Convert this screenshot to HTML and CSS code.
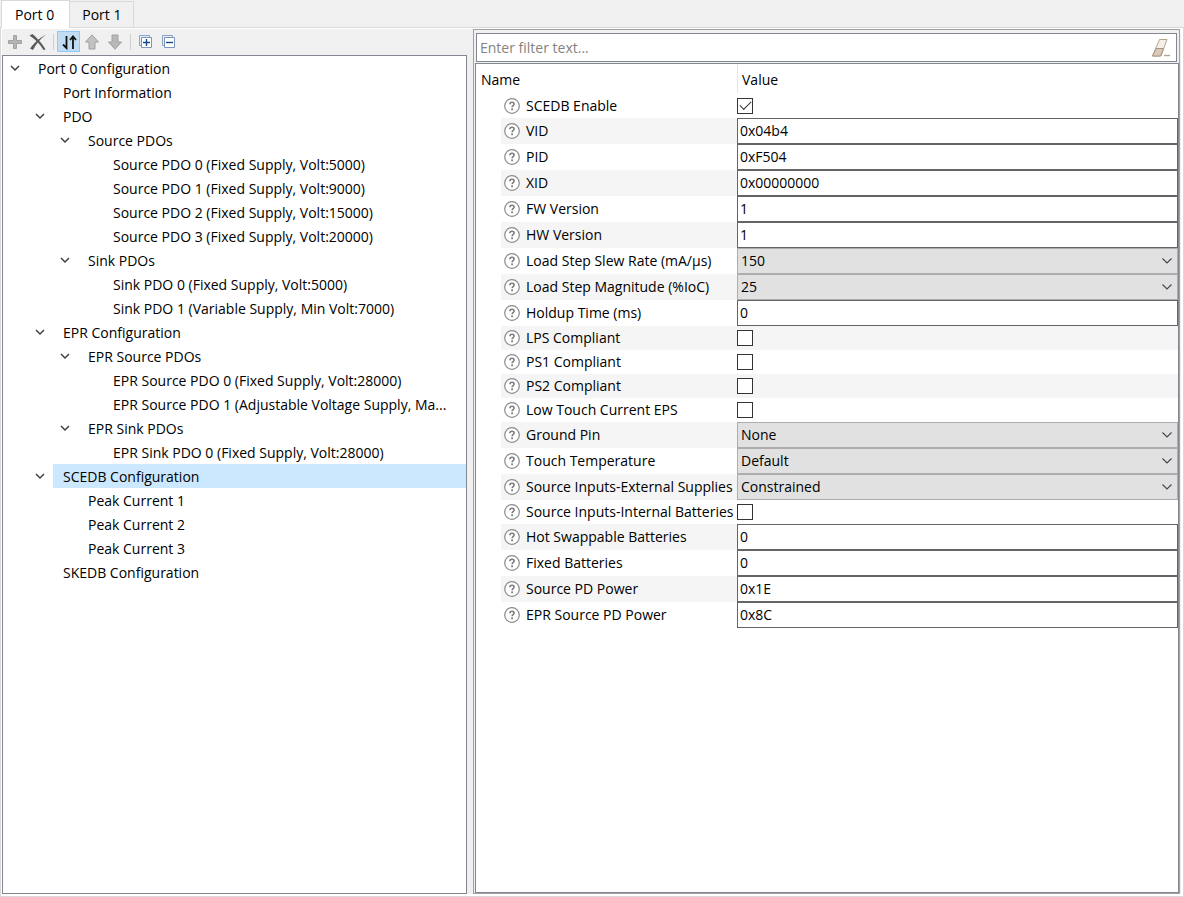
FILE: index.html
```html
<!DOCTYPE html>
<html lang="en">
<head>
<meta charset="utf-8">
<title>Port Configuration</title>
<link rel="stylesheet" href="styles.css">
</head>
<body>
<svg class="defs" aria-hidden="true">
  <symbol id="help" viewBox="0 0 16 16"><circle cx="8" cy="8" r="7.3" fill="#fff" stroke="#8a8a8a" stroke-width="1.2"/><path d="M5.9 6.3C5.9 4.9 6.8 4.3 8 4.3s2.1.7 2.1 1.8c0 1.5-2 1.5-2 3.2" fill="none" stroke="#7c7c7c" stroke-width="1.6"/><rect x="7.2" y="10.4" width="1.8" height="1.8" fill="#7c7c7c"/></symbol>
  <symbol id="chev" viewBox="0 0 10 10"><path d="M1 3l4 4 4-4" fill="none" stroke="#404040" stroke-width="1.5"/></symbol>
  <symbol id="drop" viewBox="0 0 10 10"><path d="M.5 2.5L5 7l4.500-4.500" fill="none" stroke="#444" stroke-width="1.1"/></symbol>
</svg>
<div class="app">
  <nav class="tabs" role="tablist">
    <button class="tab active" role="tab" aria-selected="true">Port 0</button>
    <button class="tab" role="tab" aria-selected="false">Port 1</button>
  </nav>
  <main class="content">
    <section class="left">
      <div class="toolbar" role="toolbar">
        <button class="tool" aria-label="Add"><svg viewBox="0 0 16 16"><path d="M6.500 1.500h3v5h5v3h-5v5h-3v-5h-5v-3h5z" fill="#b4b4b4" stroke="#a2a2a2"/></svg></button>
        <button class="tool" aria-label="Delete"><svg class="wide" viewBox="0 0 18 18"><path d="M.5 2.500L3.500 1C7 4 13 10 16.500 16.500l-2 .5C11 11 6 6 .5 2.500z" fill="#5a5a5a"/><path d="M17 1.500C10 5 5 10 1 15.500l3 1.500C7 11 11 6 17 1.500z" fill="#5a5a5a"/></svg></button>
        <span class="sep"></span>
        <button class="tool on" aria-label="Sort" aria-pressed="true"><svg class="wide" viewBox="0 0 18 18"><path d="M6.500 3v12M3 11.500l3.500 3.500V11M13 16V4M10 7l3-3.500L16 7" fill="none" stroke="#111" stroke-width="1.8"/></svg></button>
        <button class="tool" aria-label="Move up"><svg viewBox="0 0 16 16"><path d="M8 .8L14.500 8H11v7H5V8H1.500z" fill="#c2c2c2" stroke="#a0a0a0"/></svg></button>
        <button class="tool" aria-label="Move down"><svg viewBox="0 0 16 16"><path d="M8 15.200L14.500 8H11V1H5v7H1.500z" fill="#b8b8b8" stroke="#a0a0a0"/></svg></button>
        <span class="sep"></span>
        <button class="tool" aria-label="Expand all"><svg viewBox="0 0 16 16"><path d="M3.500 11.500h-2v-10h10v2" fill="#e5eef8" stroke="#8ba6c4"/><path d="M3.500 3.500h10v10h-10z" fill="#fff" stroke="#7c96b8"/><path d="M5 8.500h7M8.500 5v7" stroke="#174a85" stroke-width="1.4"/></svg></button>
        <button class="tool" aria-label="Collapse all"><svg viewBox="0 0 16 16"><path d="M3.500 11.500h-2v-10h10v2" fill="#e5eef8" stroke="#8ba6c4"/><path d="M3.500 3.500h10v10h-10z" fill="#fff" stroke="#7c96b8"/><path d="M5 8.500h7" stroke="#174a85" stroke-width="1.4"/></svg></button>
      </div>
      <div class="tree" id="tree"></div>
    </section>
    <section class="right">
      <div class="filter">
        <input type="text" aria-label="Filter" placeholder="Enter filter text...">
        <button class="clear" aria-label="Clear filter"><svg viewBox="0 0 20 20"><path d="M8.500 1.500h7.500L10 18H1.500z" fill="#f4efe9" stroke="#b5a48e"/><path d="M5 10.500h7.500L9.500 18H1.500z" fill="#d9c9b8" stroke="#a8957f"/><path d="M13 17.500h6" stroke="#b5a78f" stroke-width="1.4"/></svg></button>
      </div>
      <div class="grid">
        <table>
          <colgroup><col class="c-indent"><col class="c-name"><col></colgroup>
          <thead><tr><th colspan="2">Name</th><th class="value-head">Value</th></tr></thead>
          <tbody id="rows"></tbody>
        </table>
      </div>
    </section>
  </main>
</div>
<script src="app.js"></script>
</body>
</html>
```
FILE: styles.css
```css
* { box-sizing: border-box; }
body {
  margin: 0;
  background: #f0f0f0;
  color: #000;
  font: 14px/24px "Open Sans", "Noto Sans", sans-serif;
}
button, input, select { font: inherit; color: inherit; margin: 0; border-radius: 0; }
button { background: none; border: 0; padding: 0; }
.defs { display: none; }
.app { display: flex; flex-direction: column; min-height: 100vh; }

.tabs { display: flex; align-items: flex-end; height: 28px; padding-left: 1px; border-bottom: 1px solid #d9d9d9; }
.tab { height: 26px; padding: 0 12px; border: 1px solid #d9d9d9; border-left: 0; border-bottom: 0; }
.tab.active { height: 28px; margin-bottom: -1px; padding: 0 15px 0 13px; border-left: 1px solid #d9d9d9; background: #fff; }

.content {
  flex: 1;
  display: grid;
  grid-template-columns: 465fr 707fr;
  column-gap: 6px;
  padding: 0 3px 2px 1px;
  border: 1px solid #d9d9d9;
  border-top: 0;
  background: linear-gradient(#f0f0f0, #f0f0f0) 1px 1px / calc(100% - 3px) calc(100% - 3px) no-repeat #fff;
}
.left { display: flex; flex-direction: column; min-width: 0; }
.toolbar { display: flex; align-items: center; height: 27px; padding: 0 1px; }
.tool { display: flex; align-items: center; justify-content: center; width: 23px; height: 21px; }
.tool svg { width: 16px; height: 16px; }
.tool svg.wide { width: 18px; height: 18px; }
.tool.on { background: #c2ddf3; border: 1px solid #90c8f6; }
.sep { width: 1px; height: 16px; margin: 0 3px 0 4px; background: #cdcdcd; }

.tree { flex: 1; background: #fff; border: 1px solid #828790; }
.tree ul { list-style: none; margin: 0; padding: 0; }
.tree ul ul { padding-left: 25px; }
.node { display: flex; height: 24px; }
.toggle { width: 25px; flex: none; display: flex; align-items: center; justify-content: center; padding-right: 1px; }
.toggle svg { width: 10px; height: 10px; }
.label { flex: 1; min-width: 0; padding: 2px 10px 0; line-height: 22px; text-align: left; white-space: nowrap; overflow: hidden; text-overflow: ellipsis; }
.label.selected { background: #cce8ff; }

.right { display: flex; flex-direction: column; min-width: 0; margin-top: 1px; padding: 3px 0 0 1px; border: 1px solid #a0a0a0; }
.filter { display: flex; align-items: center; height: 29px; margin: 0 2px 1px 1px; background: #fff; border: 1px solid #828790; }
.filter input { flex: 1; min-width: 0; height: 24px; padding: 0 3px; border: 0; outline: 0; background: none; }
.filter input::placeholder { color: #838383; opacity: 1; }
.clear { display: flex; margin-right: 5px; }
.clear svg { width: 20px; height: 20px; }

.grid { flex: 1; background: #fff; border: 1px solid #828790; }
table { width: 100%; border-collapse: collapse; table-layout: fixed; }
.c-indent { width: 25px; }
.c-name { width: 236px; }
th, td { padding: 0; text-align: left; font-weight: 400; }
th { height: 30px; padding: 2px 0 0 5px; }
.value-head { background: linear-gradient(#e5e5e5, #e5e5e5) 0 0 / 1px 29px no-repeat; }
td { height: 24px; }
tr.field td { height: 26px; }
tr.stripe td + td { background: #f5f5f5; }
.name { display: flex; align-items: center; gap: 6px; padding-left: 3px; white-space: nowrap; }
.name svg { flex: none; width: 16px; height: 16px; }
td input[type="text"], td select { display: block; width: 100%; height: 26px; }
td input[type="text"] { padding: 0 2px 1px; border: 1px solid #646464; background: #fff; }
.pick { display: grid; align-items: center; }
.pick > * { grid-area: 1 / 1; }
.pick svg { justify-self: end; width: 10px; height: 10px; margin-right: 6px; pointer-events: none; }
td select { appearance: none; padding: 0 3px; border: 1px solid #adadad; background: #e1e1e1; }
td input[type="checkbox"] { display: grid; place-items: center; appearance: none; width: 16px; height: 16px; border: 1px solid #333; background: #fff; }
td input[type="checkbox"]:checked::before { content: ""; width: 10px; height: 5px; border: solid #333; border-width: 0 0 1px 1px; transform: translateY(-2px) rotate(-45deg); }
```
FILE: app.js
```js
const tree = [
  ["Port 0 Configuration", [
    ["Port Information"],
    ["PDO", [
      ["Source PDOs", [
        ["Source PDO 0 (Fixed Supply, Volt:5000)"],
        ["Source PDO 1 (Fixed Supply, Volt:9000)"],
        ["Source PDO 2 (Fixed Supply, Volt:15000)"],
        ["Source PDO 3 (Fixed Supply, Volt:20000)"]]],
      ["Sink PDOs", [
        ["Sink PDO 0 (Fixed Supply, Volt:5000)"],
        ["Sink PDO 1 (Variable Supply, Min Volt:7000)"]]]]],
    ["EPR Configuration", [
      ["EPR Source PDOs", [
        ["EPR Source PDO 0 (Fixed Supply, Volt:28000)"],
        ["EPR Source PDO 1 (Adjustable Voltage Supply, Ma..."]]],
      ["EPR Sink PDOs", [
        ["EPR Sink PDO 0 (Fixed Supply, Volt:28000)"]]]]],
    ["SCEDB Configuration", [["Peak Current 1"], ["Peak Current 2"], ["Peak Current 3"]]],
    ["SKEDB Configuration"]]]
];
const icon = id => `<svg aria-hidden="true"><use href="#${id}"/></svg>`;
const list = nodes => `<ul>${nodes.map(([text, kids]) => `<li><div class="node">${
  kids ? `<button class="toggle" aria-label="Collapse ${text}">${icon("chev")}</button>` : `<span class="toggle"></span>`
}<button class="label${text === "SCEDB Configuration" ? " selected" : ""}">${text}</button></div>${kids ? list(kids) : ""}</li>`).join("")}</ul>`;
document.getElementById("tree").innerHTML = list(tree);

const rows = [
  ["SCEDB Enable", "check", true],
  ["VID", "text", "0x04b4"],
  ["PID", "text", "0xF504"],
  ["XID", "text", "0x00000000"],
  ["FW Version", "text", "1"],
  ["HW Version", "text", "1"],
  ["Load Step Slew Rate (mA/µs)", "select", "150"],
  ["Load Step Magnitude (%IoC)", "select", "25"],
  ["Holdup Time (ms)", "text", "0"],
  ["LPS Compliant", "check", false],
  ["PS1 Compliant", "check", false],
  ["PS2 Compliant", "check", false],
  ["Low Touch Current EPS", "check", false],
  ["Ground Pin", "select", "None"],
  ["Touch Temperature", "select", "Default"],
  ["Source Inputs-External Supplies", "select", "Constrained"],
  ["Source Inputs-Internal Batteries", "check", false],
  ["Hot Swappable Batteries", "text", "0"],
  ["Fixed Batteries", "text", "0"],
  ["Source PD Power", "text", "0x1E"],
  ["EPR Source PD Power", "text", "0x8C"]
];
const control = (type, value, id) => ({
  check: () => `<input type="checkbox" id="${id}"${value ? " checked" : ""}>`,
  text: () => `<input type="text" id="${id}" value="${value}">`,
  select: () => `<div class="pick"><select id="${id}"><option>${value}</option></select>${icon("drop")}</div>`
})[type]();
document.getElementById("rows").innerHTML = rows.map(([name, type, value], i) =>
  `<tr class="${type === "check" ? "" : "field"}${i % 2 ? " stripe" : ""}"><td></td><td><label class="name" for="f${i}">${icon("help")}${name}</label></td><td>${control(type, value, "f" + i)}</td></tr>`
).join("");
```
